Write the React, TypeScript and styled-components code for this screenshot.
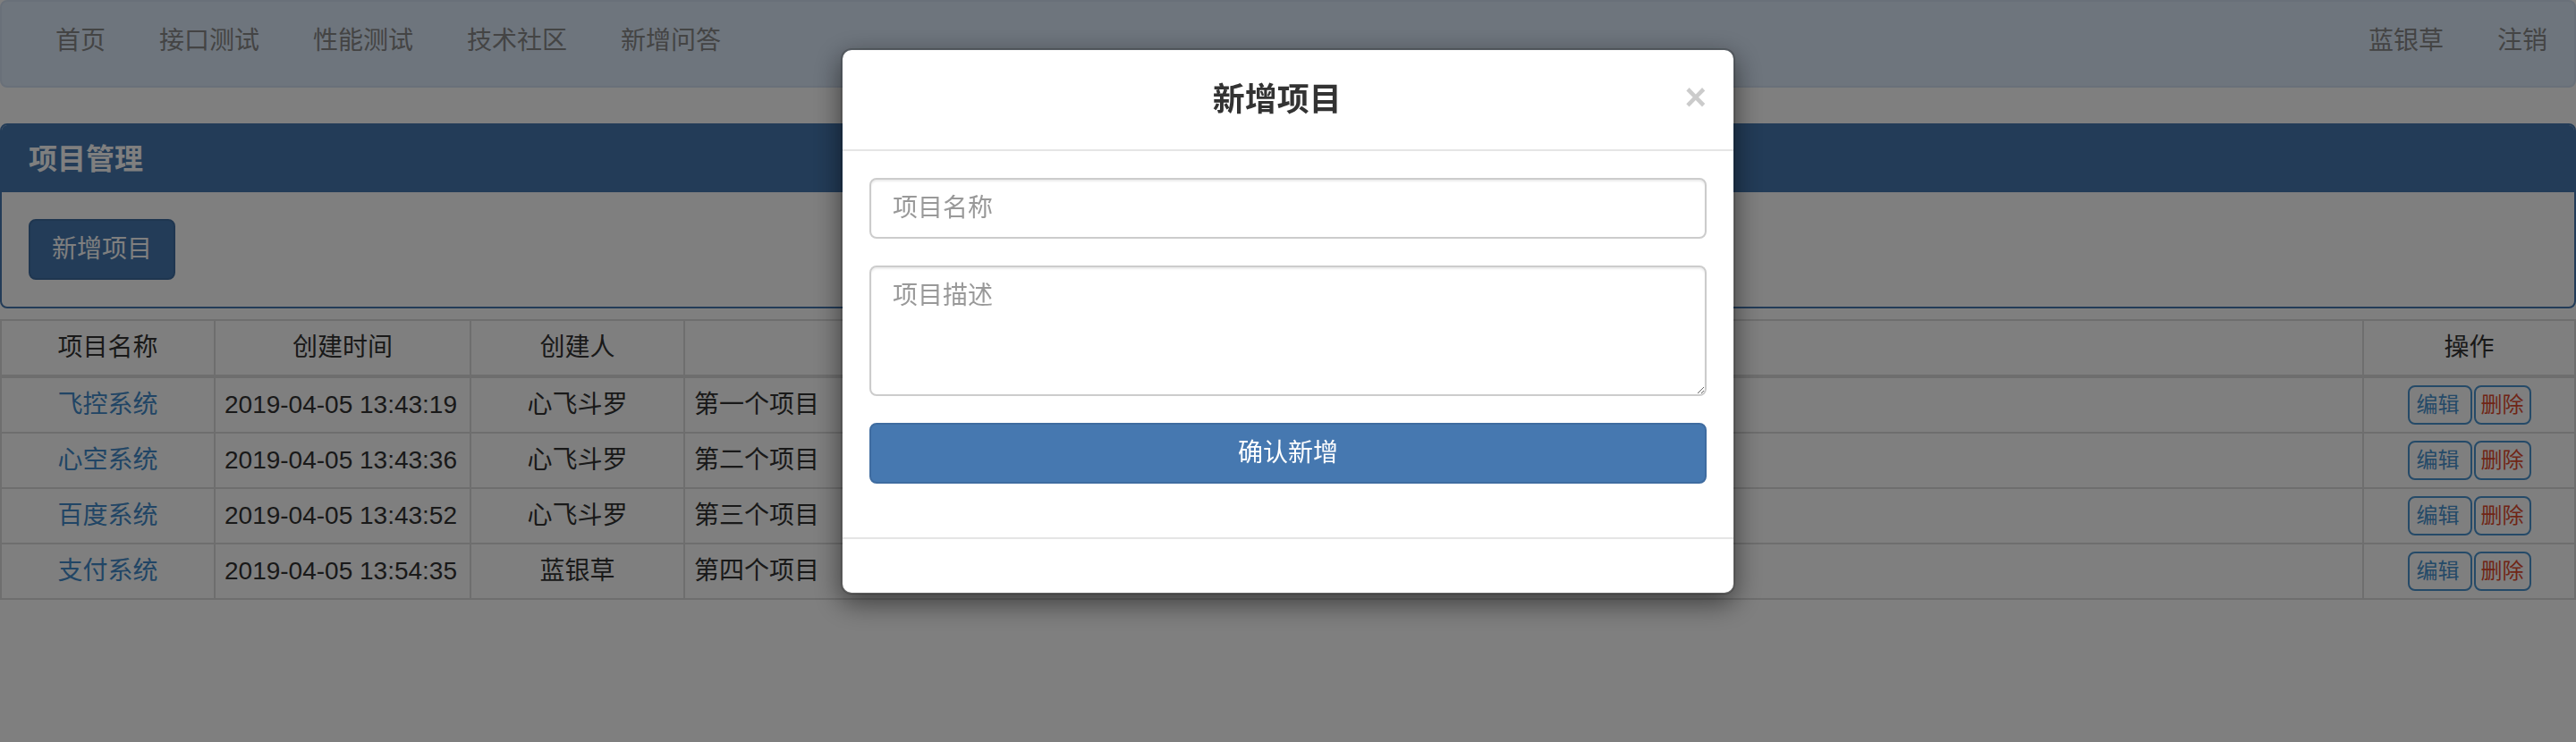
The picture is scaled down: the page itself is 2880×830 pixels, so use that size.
import React from "react";
import styled, { createGlobalStyle } from "styled-components";

const GlobalStyle = createGlobalStyle`
  * { box-sizing: border-box; }
  html, body { margin: 0; padding: 0; }
  body {
    background: #ffffff;
    color: #333333;
    font-family: "Liberation Sans", "Noto Sans CJK SC", sans-serif;
    font-size: 28px;
    line-height: 40px;
  }
`;

const Page = styled.div`
  position: relative;
  min-height: 830px;
`;

const Navbar = styled.nav`
  height: 98px;
  display: flex;
  justify-content: space-between;
  background: #dceafa;
  border: 2px solid #d3e1f2;
  border-radius: 8px;
  padding: 0 30px;
  margin-bottom: 40px;
`;

const NavList = styled.ul<{ $right?: boolean }>`
  display: flex;
  list-style: none;
  margin: 0 ${(p) => (p.$right ? "-30px" : "0")} 0 0;
  padding: 0;
`;

const NavLink = styled.a`
  display: block;
  padding: 24px 30px;
  line-height: 40px;
  font-size: 28px;
  color: #888888;
  text-decoration: none;
`;

const Panel = styled.section`
  border: 2px solid #4678b0;
  border-radius: 8px;
  margin-bottom: 12px;
  overflow: hidden;
`;

const PanelHeading = styled.div`
  background: #4678b0;
  padding: 21px 30px 19px;
`;

const PanelTitle = styled.h3`
  margin: 0;
  font-size: 32px;
  line-height: 35px;
  font-weight: bold;
  color: #ffffff;
`;

const PanelBody = styled.div`
  padding: 30px;
`;

const PrimaryButton = styled.button<{ $block?: boolean }>`
  display: ${(p) => (p.$block ? "block" : "inline-block")};
  width: ${(p) => (p.$block ? "100%" : "auto")};
  height: 68px;
  padding: 12px 24px;
  font-family: inherit;
  font-size: 28px;
  line-height: 40px;
  color: #ffffff;
  background: #4678b0;
  border: 2px solid #3f6ca0;
  border-radius: 8px;
`;

const Table = styled.table`
  width: 100%;
  table-layout: fixed;
  border-collapse: collapse;
  border: 2px solid #dddddd;
`;

const HeadCell = styled.th<{ $w?: number }>`
  width: ${(p) => (p.$w ? `${p.$w}px` : "auto")};
  padding: 10px;
  height: 61px;
  font-weight: normal;
  text-align: center;
  border: 2px solid #dddddd;
  border-bottom-width: 4px;
  color: #333333;
`;

const Cell = styled.td<{ $align?: "left" | "center"; $ops?: boolean }>`
  padding: ${(p) => (p.$ops ? "8px 10px" : "10px")};
  height: 61px;
  line-height: 40px;
  text-align: ${(p) => p.$align ?? "left"};
  vertical-align: middle;
  border: 2px solid #dddddd;
  white-space: nowrap;
  color: #333333;
`;

const NameLink = styled.a`
  color: #428bca;
  text-decoration: none;
`;

const OpGroup = styled.div`
  display: inline-flex;
  gap: 2px;
  vertical-align: middle;
`;

const OpButton = styled.button<{ $danger?: boolean }>`
  height: 44px;
  padding: ${(p) => (p.$danger ? "2px 6px" : "2px 12px 2px 8px")};
  font-family: inherit;
  font-size: 24px;
  line-height: 36px;
  background: #ffffff;
  color: ${(p) => (p.$danger ? "#e04b2e" : "#4a94d0")};
  border: 2px solid #4a94d0;
  border-radius: 8px;
`;

const Backdrop = styled.div`
  position: fixed;
  inset: 0;
  background: rgba(0, 0, 0, 0.5);
`;

const ModalLayer = styled.div`
  position: fixed;
  inset: 0;
  display: flex;
  justify-content: center;
  align-items: flex-start;
  padding-top: 54px;
`;

const ModalContent = styled.div`
  width: 1000px;
  background: #ffffff;
  border: 2px solid rgba(0, 0, 0, 0.2);
  border-radius: 12px;
  background-clip: padding-box;
  box-shadow: 0 10px 30px rgba(0, 0, 0, 0.5);
`;

const ModalHeader = styled.div`
  display: flex;
  align-items: flex-start;
  padding: 30px;
  border-bottom: 2px solid #e5e5e5;
`;

const ModalTitle = styled.h4`
  flex: 1;
  margin: 0;
  text-align: center;
  font-size: 36px;
  line-height: 51px;
  font-weight: bold;
  color: #333333;
`;

const CloseButton = styled.button`
  margin-top: 2px;
  padding: 0;
  background: transparent;
  border: 0;
  font-family: "Liberation Sans", sans-serif;
  font-size: 42px;
  font-weight: bold;
  line-height: 42px;
  color: #000000;
  opacity: 0.2;
`;

const ModalBody = styled.div`
  padding: 30px;
`;

const FormGroup = styled.div`
  margin-bottom: 30px;
`;

const TextInput = styled.input`
  display: block;
  width: 100%;
  height: 68px;
  padding: 12px 24px;
  font-family: inherit;
  font-size: 28px;
  line-height: 40px;
  color: #555555;
  background: #ffffff;
  border: 2px solid #cccccc;
  border-radius: 8px;
  box-shadow: inset 0 2px 2px rgba(0, 0, 0, 0.075);
  &::placeholder { color: #999999; }
`;

const TextArea = styled.textarea`
  display: block;
  width: 100%;
  height: 146px;
  padding: 12px 24px;
  font-family: inherit;
  font-size: 28px;
  line-height: 40px;
  color: #555555;
  background: #ffffff;
  border: 2px solid #cccccc;
  border-radius: 8px;
  box-shadow: inset 0 2px 2px rgba(0, 0, 0, 0.075);
  resize: vertical;
  &::placeholder { color: #999999; }
`;

const ModalForm = styled.form`
  display: flow-root;
`;

const ModalFooter = styled.div`
  height: 62px;
  border-top: 2px solid #e5e5e5;
`;

const leftNav = ["首页", "接口测试", "性能测试", "技术社区", "新增问答"];
const rightNav = ["蓝银草", "注销"];

const rows = [
  { name: "飞控系统", time: "2019-04-05 13:43:19", who: "心飞斗罗", desc: "第一个项目" },
  { name: "心空系统", time: "2019-04-05 13:43:36", who: "心飞斗罗", desc: "第二个项目" },
  { name: "百度系统", time: "2019-04-05 13:43:52", who: "心飞斗罗", desc: "第三个项目" },
  { name: "支付系统", time: "2019-04-05 13:54:35", who: "蓝银草", desc: "第四个项目" },
];

export default function App() {
  return (
    <Page>
      <GlobalStyle />
      <Navbar>
        <NavList>
          {leftNav.map((t) => (
            <li key={t}>
              <NavLink href="#">{t}</NavLink>
            </li>
          ))}
        </NavList>
        <NavList $right>
          {rightNav.map((t) => (
            <li key={t}>
              <NavLink href="#">{t}</NavLink>
            </li>
          ))}
        </NavList>
      </Navbar>

      <Panel>
        <PanelHeading>
          <PanelTitle>项目管理</PanelTitle>
        </PanelHeading>
        <PanelBody>
          <PrimaryButton>新增项目</PrimaryButton>
        </PanelBody>
      </Panel>

      <Table>
        <thead>
          <tr>
            <HeadCell $w={239}>项目名称</HeadCell>
            <HeadCell $w={286}>创建时间</HeadCell>
            <HeadCell $w={239}>创建人</HeadCell>
            <HeadCell>项目描述</HeadCell>
            <HeadCell $w={237}>操作</HeadCell>
          </tr>
        </thead>
        <tbody>
          {rows.map((r) => (
            <tr key={r.name}>
              <Cell $align="center">
                <NameLink href="#">{r.name}</NameLink>
              </Cell>
              <Cell>{r.time}</Cell>
              <Cell $align="center">{r.who}</Cell>
              <Cell>{r.desc}</Cell>
              <Cell $align="center" $ops>
                <OpGroup>
                  <OpButton>编辑</OpButton>
                  <OpButton $danger>删除</OpButton>
                </OpGroup>
              </Cell>
            </tr>
          ))}
        </tbody>
      </Table>

      <Backdrop />
      <ModalLayer>
        <ModalContent>
          <ModalHeader>
            <ModalTitle>新增项目</ModalTitle>
            <CloseButton type="button" aria-label="关闭">×</CloseButton>
          </ModalHeader>
          <ModalBody>
            <ModalForm onSubmit={(e) => e.preventDefault()}>
              <FormGroup>
                <TextInput placeholder="项目名称" />
              </FormGroup>
              <FormGroup>
                <TextArea placeholder="项目描述" />
              </FormGroup>
              <FormGroup>
                <PrimaryButton $block type="submit">确认新增</PrimaryButton>
              </FormGroup>
            </ModalForm>
          </ModalBody>
          <ModalFooter />
        </ModalContent>
      </ModalLayer>
    </Page>
  );
}
